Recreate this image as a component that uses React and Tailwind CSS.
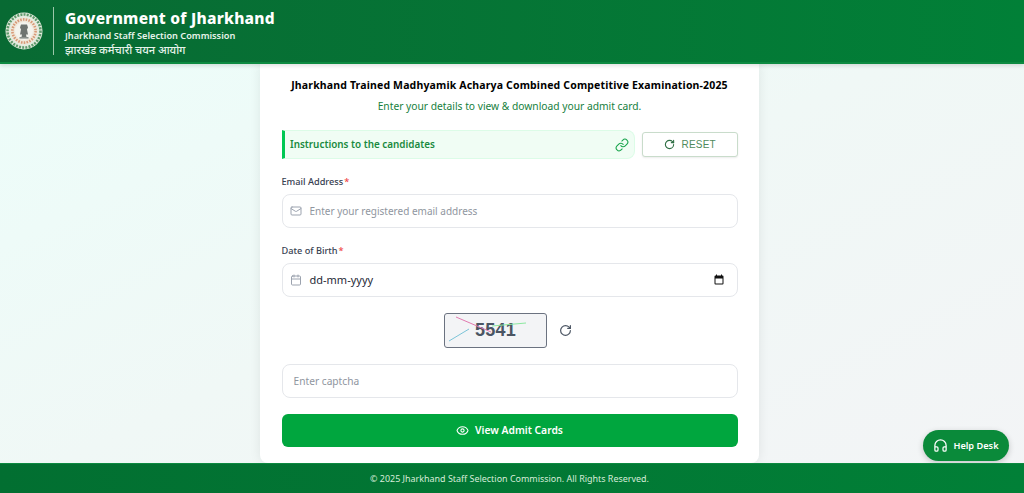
import React from "react";
import { Link as LinkIcon, Mail, Calendar, RotateCw, Eye, Headphones } from "lucide-react";

function Emblem() {
  return (
    <svg width="38" height="38" viewBox="0 0 38 38" className="shrink-0">
      <circle cx="19" cy="19" r="18.5" fill="#e4ebdf" />
      <circle cx="19" cy="19" r="16.5" fill="none" stroke="#5f9a6c" strokeWidth="2.6" strokeDasharray="2 1.2" />
      <circle cx="19" cy="19" r="13.2" fill="#f1e9dc" />
      <circle cx="19" cy="19" r="11.6" fill="none" stroke="#d79a78" strokeWidth="2.6" strokeDasharray="1.6 1.2" />
      <circle cx="19" cy="19" r="9" fill="#f4f4ee" />
      <path d="M16 12.5h6l1 3-1 2 1 5h-2l.5 2.5h-5l.5-2.5h-2l1-5-1-2z" fill="#6f7470" />
      <rect x="14.5" y="25" width="9" height="1.6" fill="#8a8f8a" />
    </svg>
  );
}

function Label({ children }) {
  return (
    <label className="block text-[9.2px] leading-[17px] font-medium text-[#374151]">
      {children}
      <span className="text-[#ef4444] ml-[1px]">*</span>
    </label>
  );
}

export default function App() {
  return (
    <div className="h-[493px] w-[1024px] overflow-hidden flex flex-col font-['Noto_Sans',sans-serif] bg-gradient-to-br from-[#ecfefa] via-[#f0f8f6] to-[#f3f4f6]">
      <header className="h-[64px] shrink-0 z-10 flex items-center gap-[10px] pl-[5px] bg-gradient-to-r from-[#086a33] to-[#018037] border-b-2 border-[#0d8a41] shadow-[0_2px_4px_rgba(0,0,0,0.12)]">
        <Emblem />
        <div className="w-px h-[48px] bg-[#9cc7a9]" />
        <div className="text-white ml-[1px]">
          <div className="text-[15.5px] leading-[20px] font-extrabold tracking-[0.25px] mt-[1px]">Government of Jharkhand</div>
          <div className="text-[9.2px] leading-[14px] font-semibold mt-[1px] text-[#e6f3ea]">Jharkhand Staff Selection Commission</div>
          <div className="text-[11px] leading-[13px] font-medium text-[#e6f3ea]">झारखंड कर्मचारी चयन आयोग</div>
        </div>
      </header>

      <main className="flex-1 relative flex justify-center min-h-0 pr-[5px]">
        <div className="w-[499px] h-full bg-white rounded-b-lg pt-[13px] px-[21.5px] shadow-[0_0_12px_rgba(0,0,0,0.08)]">
          <h1 className="text-center text-[10.5px] leading-[16px] font-bold tracking-[0.16px] text-black whitespace-nowrap">
            Jharkhand Trained Madhyamik Acharya Combined Competitive Examination-2025
          </h1>
          <p className="text-center text-[10.25px] leading-[16px] mt-[5px] text-[#16803d]">
            Enter your details to view &amp; download your admit card.
          </p>

          <div className="flex items-center gap-[7.5px] mt-[16px]">
            <div className="flex-1 h-[29px] flex items-center justify-between pl-[5.5px] pr-[5px] bg-[#f0fdf4] border border-[#dcfce7] border-l-[3px] border-l-[#00c853] rounded-r-lg">
              <span className="text-[9.9px] font-semibold text-[#1a8a3f]">Instructions to the candidates</span>
              <LinkIcon size={14} strokeWidth={1.8} className="text-[#16a34a]" />
            </div>
            <button className="w-[95.5px] h-[25px] flex items-center justify-center gap-[7px] border border-[#c9dccb] rounded-[3px] bg-white text-[#4f8a5c] text-[10px] font-['Liberation_Sans',sans-serif] tracking-[0.2px] shadow-[0_1px_2px_rgba(0,0,0,0.08)]">
              <RotateCw size={11} strokeWidth={2.4} className="text-[#2f6f44]" />
              RESET
            </button>
          </div>

          <div className="mt-[14px]">
            <Label>Email Address</Label>
            <div className="mt-[4px] h-[34px] flex items-center gap-[8px] px-[7px] border border-[#e5e7eb] rounded-lg">
              <Mail size={12} className="text-[#9ca3af]" />
              <span className="text-[10px] text-[#8f96a0]">Enter your registered email address</span>
            </div>
          </div>

          <div className="mt-[14px]">
            <Label>Date of Birth</Label>
            <div className="mt-[4px] h-[34px] flex items-center gap-[8px] px-[7px] border border-[#e5e7eb] rounded-lg">
              <Calendar size={12} className="text-[#9ca3af]" />
              <span className="flex-1 text-[11px] text-[#1f2937]">dd-mm-yyyy</span>
              <svg width="12" height="12" viewBox="0 0 24 24" className="mr-[5px]" fill="#111">
                <path d="M19 3h-1V1h-2v2H8V1H6v2H5a2 2 0 0 0-2 2v14a2 2 0 0 0 2 2h14a2 2 0 0 0 2-2V5a2 2 0 0 0-2-2zm0 16H5V9h14v10z" />
              </svg>
            </div>
          </div>

          <div className="mt-[16px] flex justify-center items-center gap-[12px] pr-[4px]">
            <div className="relative w-[103px] h-[35px] bg-[#f3f4f6] border border-[#6b7280] rounded-[3px] flex items-center justify-center overflow-hidden">
              <span className="text-[18px] font-bold text-[#4b5563] font-['Liberation_Sans',sans-serif] tracking-[0.3px] ml-[1px]">5541</span>
              <svg className="absolute inset-0" width="103" height="35" viewBox="0 0 103 35">
                <path d="M11 3 L46 18" stroke="#e27bb0" strokeWidth="1" fill="none" />
                <path d="M4 27 L24 15" stroke="#7cc4d8" strokeWidth="1" fill="none" />
                <path d="M47 12 L81 9" stroke="#8ce8a0" strokeWidth="1" fill="none" />
              </svg>
            </div>
            <RotateCw size={13} strokeWidth={2.2} className="text-[#4b5563]" />
          </div>

          <div className="mt-[16px] h-[34px] flex items-center px-[11px] pt-[1px] border border-[#e5e7eb] rounded-lg">
            <span className="text-[10.2px] text-[#8f96a0]">Enter captcha</span>
          </div>

          <button className="mt-[16px] w-full h-[32.5px] flex items-center justify-center gap-[6px] rounded-md bg-[#00a63e] text-white text-[10.3px] font-semibold">
            <Eye size={13} />
            View Admit Cards
          </button>
        </div>

        <button className="absolute right-[15px] bottom-[2px] w-[86px] h-[31px] flex items-center justify-center gap-[5px] rounded-full bg-[#0a8a3a] text-white text-[9.2px] font-semibold shadow-[0_2px_6px_rgba(0,0,0,0.2)]">
          <Headphones size={15} />
          Help Desk
        </button>
      </main>

      <footer className="h-[30px] shrink-0 z-10 flex items-center justify-center pr-[5px] bg-gradient-to-r from-[#026f31] to-[#018037] border-t border-[#0d8a41] text-[8.95px] text-[#d7ecd9]">
        © 2025 Jharkhand Staff Selection Commission. All Rights Reserved.
      </footer>
    </div>
  );
}
